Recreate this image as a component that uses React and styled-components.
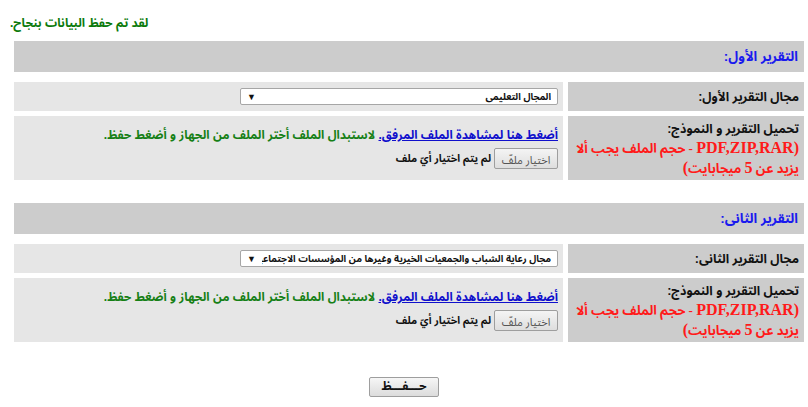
import React from 'react';
import styled, { createGlobalStyle } from 'styled-components';

const GlobalStyle = createGlobalStyle`
  body {
    margin: 0;
    background: #ffffff;
    font-family: "Liberation Sans", "Noto Sans Arabic", "DejaVu Sans Condensed", "DejaVu Sans", sans-serif;
  }
`;

const Page = styled.div`
  width: 808px;
  padding: 0 4px 0 14px;
  box-sizing: border-box;
`;

const SuccessMsg = styled.div`
  direction: rtl;
  width: max-content;
  margin: 16px 0 0 -4px;
  height: 14px;
  line-height: 14px;
  font-size: 12px;
  font-weight: bold;
  color: #0b7a0b;
`;

const Section = styled.section`
  margin-top: ${p => p.$top}px;
  direction: rtl;
`;

const SectionHeader = styled.div`
  height: 31px;
  background: #cccccc;
  display: flex;
  align-items: center;
  padding-right: 6px;
  font-size: 13.5px;
  font-weight: bold;
  color: #1a1aee;
  margin-bottom: 10px;
`;

const Row = styled.div`
  display: grid;
  grid-template-columns: 236px 1fr;
  column-gap: 5px;
  height: ${p => p.$h}px;
  margin-bottom: 5px;
`;

const LabelCell = styled.div`
  background: #cccccc;
  padding: ${p => (p.$top ? '4px 5px 0 0' : '0 5px 0 0')};
  display: flex;
  flex-direction: column;
  justify-content: ${p => (p.$top ? 'flex-start' : 'center')};
  font-size: 12.5px;
  font-weight: bold;
  color: #111;
  line-height: 18px;
`;

const Note = styled.div`
  font-family: "Liberation Serif", "Noto Sans Arabic", "DejaVu Sans Condensed", "DejaVu Sans", serif;
  font-size: 13px;
  color: #ff1a1a;
  line-height: 19px;
`;

const Latin = styled.span`
  font-size: 16px;
  line-height: 19px;
`;

const ValueCell = styled.div`
  background: #e6e6e6;
  padding: 0 5px;
  display: flex;
  flex-direction: column;
  justify-content: center;
  align-items: flex-start;
`;

const FakeSelect = styled.div`
  width: 318px;
  height: 17px;
  box-sizing: border-box;
  border: 1px solid #a6a6a6;
  border-radius: 2px;
  background: #ffffff;
  display: flex;
  align-items: center;
  padding: 0 6px 0 6px;
  gap: 6px;
  font-size: 9.5px;
  font-weight: bold;
  color: #111;
  overflow: hidden;
`;

const SelectText = styled.span`
  flex: 1;
  white-space: nowrap;
  overflow: hidden;
`;

const Arrow = styled.span`
  font-size: 9px;
  color: #111;
`;

const InfoLine = styled.div`
  font-size: 12px;
  font-weight: bold;
  color: #168016;
  line-height: 16px;
  white-space: nowrap;
`;

const ViewLink = styled.a`
  color: #1010cc;
  text-decoration: underline;
  font-weight: bold;
`;

const FileRow = styled.div`
  display: flex;
  align-items: center;
  gap: 3px;
  margin-top: 5px;
`;

const FileButton = styled.button`
  width: 64px;
  height: 21px;
  border: 1px solid #9e9e9e;
  border-radius: 2px;
  background: linear-gradient(#f4f4f4, #dedede);
  font-family: inherit;
  font-size: 11px;
  color: #555;
  padding: 0;
`;

const FileStatus = styled.span`
  font-size: 10.5px;
  font-weight: bold;
  color: #111;
`;

const SaveWrap = styled.div`
  display: flex;
  justify-content: center;
  margin-top: 35px;
  padding-right: 10px;
`;

const SaveButton = styled.button`
  width: 70px;
  height: 20px;
  border: 1px solid #9e9e9e;
  border-radius: 2px;
  background: linear-gradient(#f6f6f6, #dcdcdc);
  font-family: inherit;
  font-size: 12px;
  line-height: 14px;
  font-weight: bold;
  color: #111;
  padding: 0 0 2px;
  direction: rtl;
`;

function ReportSection({ top, title, fieldLabel, fieldValue }) {
  return (
    <Section $top={top}>
      <SectionHeader>{title}</SectionHeader>
      <Row $h={29}>
        <LabelCell>{fieldLabel}</LabelCell>
        <ValueCell>
          <FakeSelect>
            <SelectText>{fieldValue}</SelectText>
            <Arrow>▼</Arrow>
          </FakeSelect>
        </ValueCell>
      </Row>
      <Row $h={64}>
        <LabelCell $top>
          <span>تحميل التقرير و النموذج:</span>
          <Note>
            <Latin>(PDF,ZIP,RAR</Latin> - حجم الملف يجب ألا يزيد عن <Latin>5</Latin> ميجابايت<Latin>)</Latin>
          </Note>
        </LabelCell>
        <ValueCell>
          <InfoLine>
            <ViewLink href="#">أضغط هنا لمشاهدة الملف المرفق.</ViewLink> لاستبدال الملف أختر الملف من الجهاز و أضغط حفظ.
          </InfoLine>
          <FileRow>
            <FileButton type="button">اختيار ملفّ</FileButton>
            <FileStatus>لم يتم اختيار أيّ ملف</FileStatus>
          </FileRow>
        </ValueCell>
      </Row>
    </Section>
  );
}

export default function App() {
  return (
    <Page>
      <GlobalStyle />
      <SuccessMsg>لقد تم حفظ البيانات بنجاح.</SuccessMsg>
      <ReportSection
        top={11}
        title="التقرير الأول:"
        fieldLabel="مجال التقرير الأول:"
        fieldValue="المجال التعليمى"
      />
      <ReportSection
        top={23}
        title="التقرير الثانى:"
        fieldLabel="مجال التقرير الثانى:"
        fieldValue="مجال رعاية الشباب والجمعيات الخيرية وغيرها من المؤسسات الاجتماعية"
      />
      <SaveWrap>
        <SaveButton type="button">حـــفـــظ</SaveButton>
      </SaveWrap>
    </Page>
  );
}
